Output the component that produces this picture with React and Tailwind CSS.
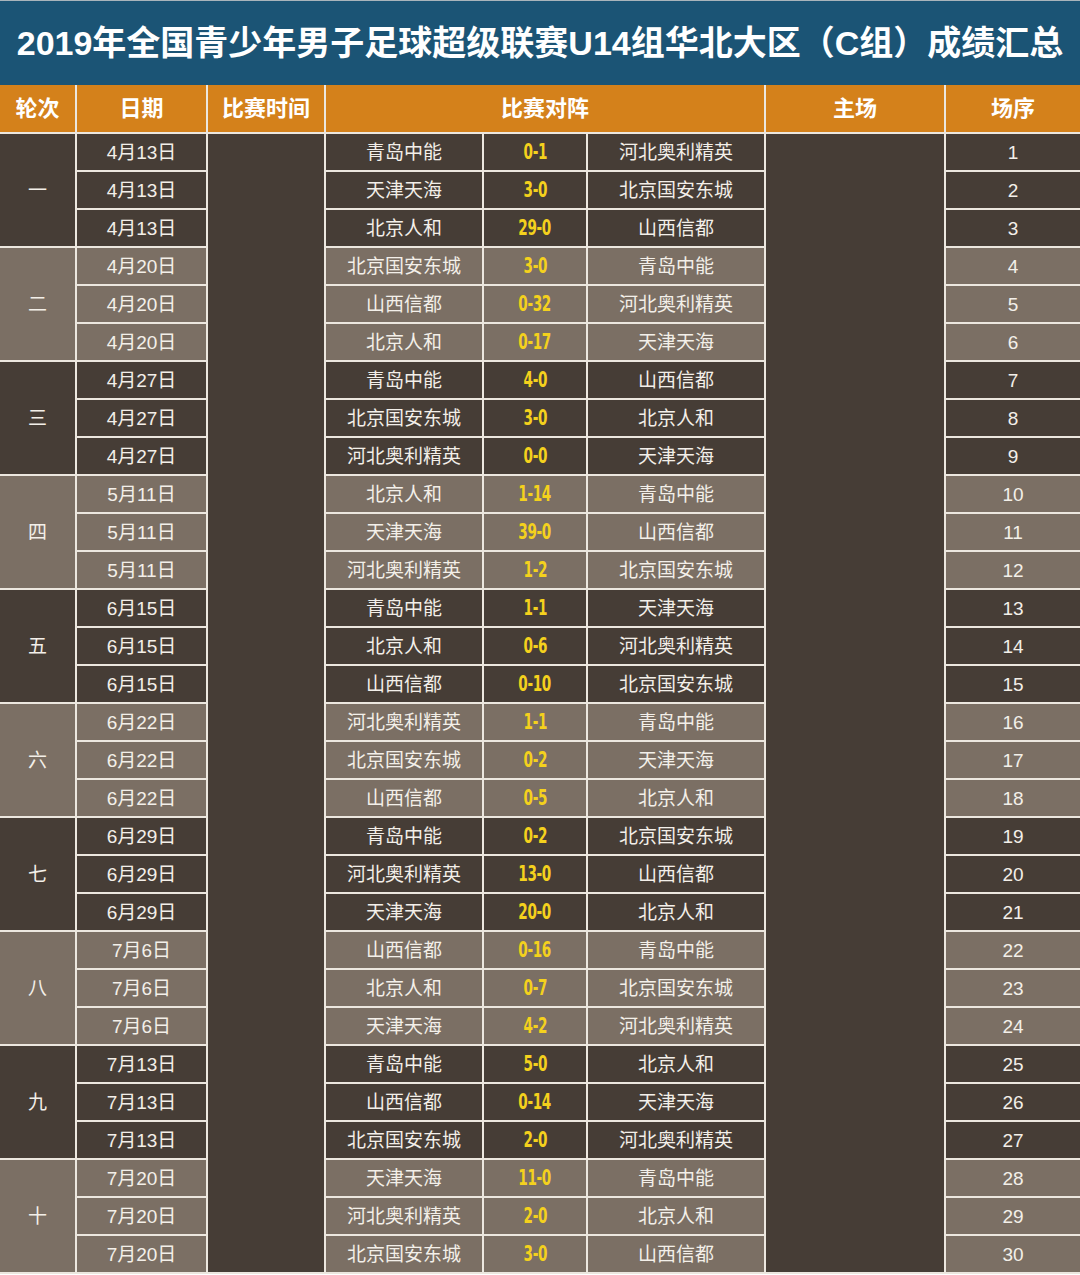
import React from 'react';

const rounds = [
  { name: '一', date: '4月13日', games: [['青岛中能', '0-1', '河北奥利精英'], ['天津天海', '3-0', '北京国安东城'], ['北京人和', '29-0', '山西信都']] },
  { name: '二', date: '4月20日', games: [['北京国安东城', '3-0', '青岛中能'], ['山西信都', '0-32', '河北奥利精英'], ['北京人和', '0-17', '天津天海']] },
  { name: '三', date: '4月27日', games: [['青岛中能', '4-0', '山西信都'], ['北京国安东城', '3-0', '北京人和'], ['河北奥利精英', '0-0', '天津天海']] },
  { name: '四', date: '5月11日', games: [['北京人和', '1-14', '青岛中能'], ['天津天海', '39-0', '山西信都'], ['河北奥利精英', '1-2', '北京国安东城']] },
  { name: '五', date: '6月15日', games: [['青岛中能', '1-1', '天津天海'], ['北京人和', '0-6', '河北奥利精英'], ['山西信都', '0-10', '北京国安东城']] },
  { name: '六', date: '6月22日', games: [['河北奥利精英', '1-1', '青岛中能'], ['北京国安东城', '0-2', '天津天海'], ['山西信都', '0-5', '北京人和']] },
  { name: '七', date: '6月29日', games: [['青岛中能', '0-2', '北京国安东城'], ['河北奥利精英', '13-0', '山西信都'], ['天津天海', '20-0', '北京人和']] },
  { name: '八', date: '7月6日', games: [['山西信都', '0-16', '青岛中能'], ['北京人和', '0-7', '北京国安东城'], ['天津天海', '4-2', '河北奥利精英']] },
  { name: '九', date: '7月13日', games: [['青岛中能', '5-0', '北京人和'], ['山西信都', '0-14', '天津天海'], ['北京国安东城', '2-0', '河北奥利精英']] },
  { name: '十', date: '7月20日', games: [['天津天海', '11-0', '青岛中能'], ['河北奥利精英', '2-0', '北京人和'], ['北京国安东城', '3-0', '山西信都']] },
];

const cell = 'flex items-center justify-center pt-[2px] text-[19px] text-[#f3efe9]';
const head = 'bg-[#d4811b] flex items-center justify-center text-[22px] font-bold text-white';

const App = () => {
  let num = 0;
  return (
    <div
      className="w-[1080px] bg-[#ece7df]"
      style={{ fontFamily: "'Liberation Sans', 'Noto Sans CJK SC', sans-serif" }}
    >
      <div className="h-[85px] border-t border-[#a9b4bb] bg-[#1b5475] flex items-center justify-center">
        <h1 className="text-[34px] font-bold text-white leading-none">
          2019年全国青少年男子足球超级联赛U14组华北大区（C组）成绩汇总
        </h1>
      </div>
      <div className="grid grid-cols-[75px_129px_116px_156px_102px_176px_178px_134px] grid-rows-[47px_repeat(30,36px)] gap-[2px] pb-[2px]">
        <div className={head}>轮次</div>
        <div className={head}>日期</div>
        <div className={head}>比赛时间</div>
        <div className={`col-span-3 ${head}`}>比赛对阵</div>
        <div className={head}>主场</div>
        <div className={head}>场序</div>

        {/* merged empty columns */}
        <div className="col-start-3 row-start-2 row-span-30 bg-[#463d36]" />
        <div className="col-start-7 row-start-2 row-span-30 bg-[#463d36]" />

        {rounds.map((r, i) => {
          const bg = i % 2 === 0 ? 'bg-[#463d36]' : 'bg-[#7b6f64]';
          return (
            <React.Fragment key={r.name}>
              <div className={`col-start-1 row-span-3 ${bg} ${cell}`}>{r.name}</div>
              {r.games.map((g, j) => {
                num += 1;
                return (
                  <React.Fragment key={j}>
                    <div className={`col-start-2 ${bg} ${cell}`}>{r.date}</div>
                    <div className={`col-start-4 ${bg} ${cell}`}>{g[0]}</div>
                    <div className={`col-start-5 ${bg} flex items-center justify-center pt-[2px]`}>
                      <span
                        className="text-[21px] font-bold text-[#f4d11d] scale-x-[0.72] tracking-[-0.5px]"
                        style={{ fontFamily: "'DejaVu Sans Condensed', 'DejaVu Sans', sans-serif" }}
                      >
                        {g[1]}
                      </span>
                    </div>
                    <div className={`col-start-6 ${bg} ${cell}`}>{g[2]}</div>
                    <div className={`col-start-8 ${bg} ${cell}`}>{num}</div>
                  </React.Fragment>
                );
              })}
            </React.Fragment>
          );
        })}
      </div>
    </div>
  );
};

export default App;
